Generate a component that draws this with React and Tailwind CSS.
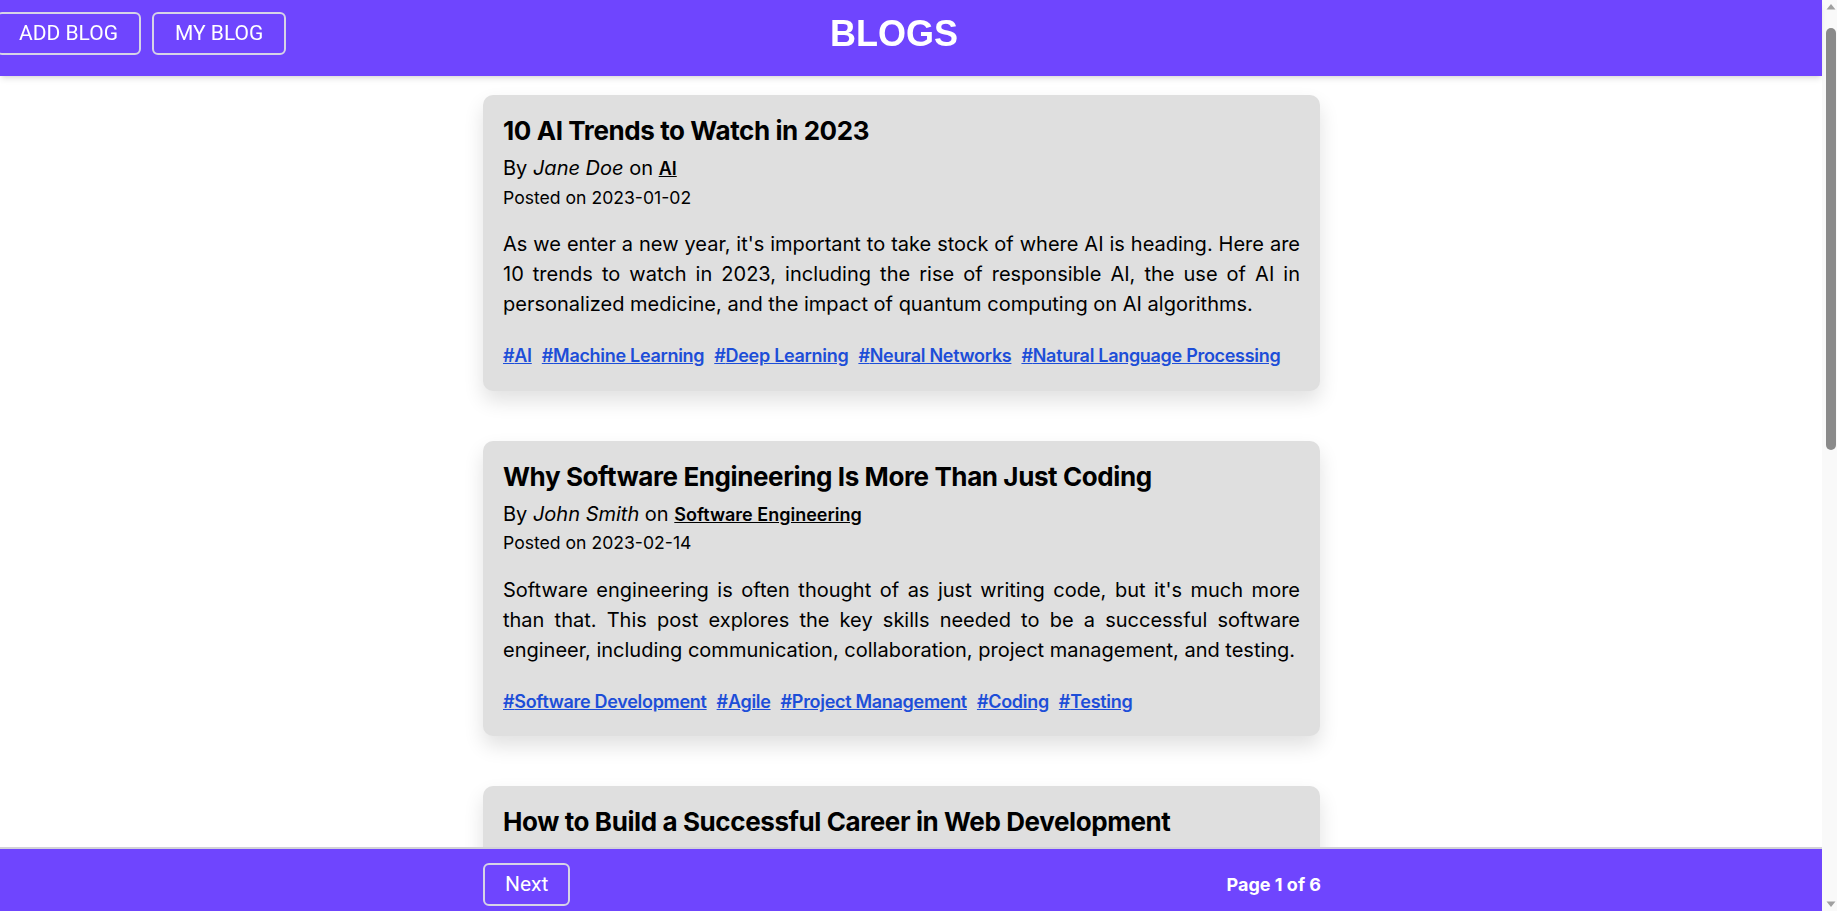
import React from 'react';

const blogs = [
  {
    title: '10 AI Trends to Watch in 2023',
    author: 'Jane Doe',
    category: 'AI',
    date: '2023-01-02',
    body: "As we enter a new year, it's important to take stock of where AI is heading. Here are 10 trends to watch in 2023, including the rise of responsible AI, the use of AI in personalized medicine, and the impact of quantum computing on AI algorithms.",
    tags: ['AI', 'Machine Learning', 'Deep Learning', 'Neural Networks', 'Natural Language Processing'],
  },
  {
    title: 'Why Software Engineering Is More Than Just Coding',
    author: 'John Smith',
    category: 'Software Engineering',
    date: '2023-02-14',
    body: "Software engineering is often thought of as just writing code, but it's much more than that. This post explores the key skills needed to be a successful software engineer, including communication, collaboration, project management, and testing.",
    tags: ['Software Development', 'Agile', 'Project Management', 'Coding', 'Testing'],
  },
  {
    title: 'How to Build a Successful Career in Web Development',
    author: 'Sarah Lee',
    category: 'Web Development',
    date: '2023-03-08',
    body: 'Web development is a fast-moving field with plenty of opportunities. In this post we look at the skills, tools and habits that help developers grow, from mastering the fundamentals to building a portfolio and finding a mentor.',
    tags: ['Web Development', 'Career', 'JavaScript', 'HTML', 'CSS'],
  },
  {
    title: 'Getting Started with Cloud Computing',
    author: 'Michael Brown',
    category: 'Cloud',
    date: '2023-03-21',
    body: 'Cloud computing has changed the way we build and run software. This guide covers the basics of cloud services, the differences between IaaS, PaaS and SaaS, and how to choose the right provider for your project.',
    tags: ['Cloud', 'AWS', 'Azure', 'DevOps'],
  },
  {
    title: 'The Basics of Cybersecurity for Developers',
    author: 'Emily Davis',
    category: 'Security',
    date: '2023-04-05',
    body: 'Security should be part of every stage of development. Learn about common vulnerabilities, secure coding practices, and the tools that can help you keep your applications and your users safe.',
    tags: ['Security', 'OWASP', 'Encryption', 'Best Practices'],
  },
  {
    title: 'A Beginner’s Guide to Data Science',
    author: 'David Wilson',
    category: 'Data Science',
    date: '2023-04-18',
    body: 'Data science combines statistics, programming and domain knowledge to extract insights from data. Here is an overview of the key concepts, the most popular tools, and how to start your first project.',
    tags: ['Data Science', 'Python', 'Statistics', 'Pandas'],
  },
  {
    title: 'Mobile App Development Trends in 2023',
    author: 'Laura Martinez',
    category: 'Mobile',
    date: '2023-05-02',
    body: 'From cross-platform frameworks to on-device machine learning, mobile development keeps evolving. We look at the trends that are shaping how apps are designed, built and shipped this year.',
    tags: ['Mobile', 'Flutter', 'React Native', 'iOS', 'Android'],
  },
  {
    title: 'Writing Clean and Maintainable Code',
    author: 'Chris Taylor',
    category: 'Best Practices',
    date: '2023-05-16',
    body: 'Clean code is easier to read, test and change. This post covers naming, small functions, meaningful comments, and refactoring techniques that keep a codebase healthy as it grows.',
    tags: ['Clean Code', 'Refactoring', 'Testing'],
  },
  {
    title: 'An Introduction to Blockchain Technology',
    author: 'Anna White',
    category: 'Blockchain',
    date: '2023-06-01',
    body: 'Blockchain is more than cryptocurrency. Discover how distributed ledgers work, where they are being used today, and what challenges remain before wider adoption.',
    tags: ['Blockchain', 'Crypto', 'Web3'],
  },
];

function BlogCard({ blog }) {
  return (
    <div className="bg-[#dfdfdf] rounded-[10px] shadow-[0_10px_20px_rgba(0,0,0,0.12)] px-5 pt-5 pb-[24px] text-black">
      <h2 className="text-[26px] font-bold leading-[1.21] tracking-[-0.4px]">{blog.title}</h2>
      <p className="mt-[10px] text-[20px] leading-[1.21]">
        By <em>{blog.author}</em> on{' '}
        <a href="#" className="font-semibold underline text-[18px]">{blog.category}</a>
      </p>
      <p className="mt-[6px] text-[17.6px] leading-[1.21]">Posted on {blog.date}</p>
      <p className="mt-[21px] text-[20px] leading-[30px] text-justify">{blog.body}</p>
      <div className="mt-[26px] flex flex-wrap gap-x-[10px] text-[18px] leading-[1.21] font-semibold tracking-[-0.3px] text-[#1d4ed8]">
        {blog.tags.map((tag) => (
          <a key={tag} href="#" className="underline">#{tag}</a>
        ))}
      </div>
    </div>
  );
}

// stand-in for the browser's vertical scrollbar seen in the screenshot
function Scrollbar() {
  return (
    <div className="fixed top-0 right-0 bottom-0 w-[15px] bg-[#f9f9f9] flex flex-col items-start pl-[4px]">
      <svg width="10" height="7" viewBox="0 0 10 7" className="mt-[3px]">
        <path d="M0.5 6.5 L5 1 L9.5 6.5 Z" fill="#a0a0a0" />
      </svg>
      <div className="mt-[18px] w-[10px] h-[422px] rounded-full bg-[#8a8a8a]" />
      <div className="flex-1" />
      <svg width="10" height="7" viewBox="0 0 10 7" className="mb-[3px]">
        <path d="M0.5 0.5 L5 6 L9.5 0.5 Z" fill="#a0a0a0" />
      </svg>
    </div>
  );
}

export default function App() {
  return (
    <div className="min-h-screen bg-white font-['Inter',sans-serif]">
      <div className="mr-[15px]">
        <header className="sticky top-0 z-10 h-[76px] bg-[#6f45fe] shadow-md grid grid-cols-[1fr_auto_1fr] items-start pt-3 pr-[34px]">
          <div className="flex gap-[11px] ml-[-4px] font-['Roboto',sans-serif]">
            <button className="border-2 border-[#d6d3e6] rounded-md px-[21px] h-[43px] text-[21px] text-white">ADD BLOG</button>
            <button className="border-2 border-[#d6d3e6] rounded-md px-[21px] h-[43px] text-[21px] text-white">MY BLOG</button>
          </div>
          <h1 className="font-['Liberation_Sans',Arial,sans-serif] font-bold text-[36px] leading-[43px] text-white">BLOGS</h1>
          <div />
        </header>

        <main className="ml-[483px] w-[837px] pt-[19px] pb-[120px] flex flex-col gap-[50px]">
          {blogs.map((blog) => (
            <BlogCard key={blog.title} blog={blog} />
          ))}
        </main>
      </div>

      <footer className="fixed bottom-0 left-0 right-[15px] h-[64px] bg-[#6f45fe] border-t-2 border-[#d2d2d8] pt-[14px]">
        <div className="ml-[483px] w-[838px] flex items-center justify-between">
          <button className="border-2 border-[#d6d3e6] rounded-md px-5 h-[43px] text-[21px] text-white font-['Roboto',sans-serif]">Next</button>
          <span className="text-[18px] font-bold text-white">Page 1 of 6</span>
        </div>
      </footer>

      <Scrollbar />
    </div>
  );
}
